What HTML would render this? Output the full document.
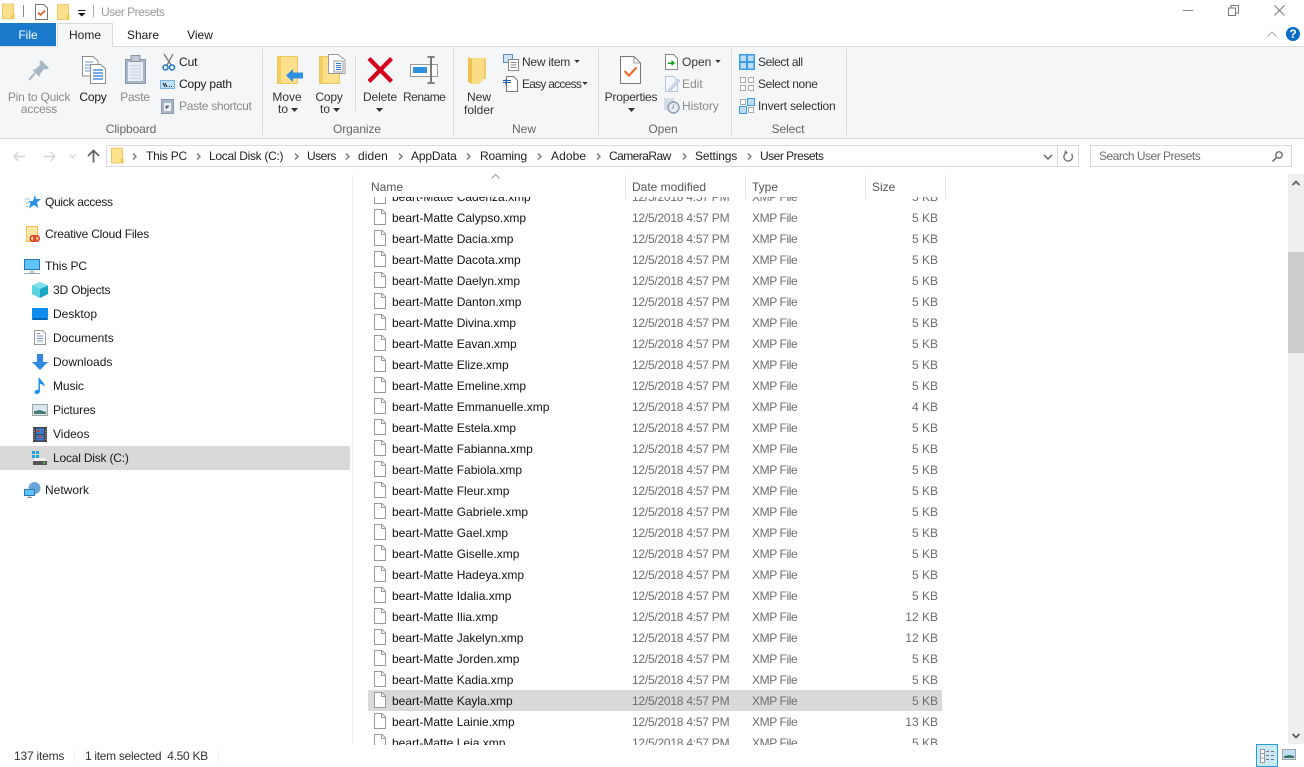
<!DOCTYPE html>
<html><head><meta charset="utf-8"><title>User Presets</title>
<style>
html,body{margin:0;padding:0;background:#fff}
body{width:1304px;height:767px;position:relative;overflow:hidden;font:12px/16px "Liberation Sans",sans-serif;color:#1a1a1a}
.t{position:absolute;white-space:nowrap;line-height:16px}
.c{text-align:center}
.g{color:#8a8a8a}
.l{color:#666}
.b{position:absolute;background:#dadbdc}
svg{position:absolute;overflow:visible}
#list{position:absolute;left:368px;top:197px;width:574px;height:548px;overflow:hidden}
.r{position:absolute;left:0;width:574px;height:21px;line-height:21px;color:#111}
.r svg{left:6px;top:2px}
.r span{position:absolute;top:1px;white-space:nowrap}
.n{left:24px}.d{left:264px;color:#6d6d6d;letter-spacing:-.24px}.y{left:384px;color:#6d6d6d;letter-spacing:-.4px}.s{right:4px;color:#6d6d6d}
</style></head><body>
<svg width="0" height="0" style="position:absolute"><defs>
<symbol id="file" viewBox="0 0 12 16"><path d="M.5.5H8L11.500 4V15.500H.5Z" fill="#fff" stroke="#9a9a9a"/><path d="M7.500.5V4.500H11.500" fill="none" stroke="#9a9a9a"/></symbol>
<symbol id="fold" viewBox="0 0 14 17"><path d="M.5.5H12.500V16.500H.5Z" fill="#fde08c" stroke="#e8c560"/><path d="M10.500 11.500H13.500V16.500H10.500Z" fill="#f0c94f"/></symbol>
<symbol id="caret" viewBox="0 0 7 4"><path d="M0 0H7L3.500 4Z" fill="#333"/></symbol>
<symbol id="chev" viewBox="0 0 5 7"><path d="M1 .5L4 3.500L1 6.500" fill="none" stroke="#777" stroke-width="1.400"/></symbol>
</defs></svg>

<!-- title bar -->
<svg style="left:2px;top:3px" width="13" height="17"><use href="#fold" width="13" height="17"/></svg>
<div class="b" style="left:23px;top:5px;width:1px;height:12px;background:#888"></div>
<svg style="left:35px;top:4px" width="13" height="16"><path d="M.5.500H9L12.500 4V15.500H.500Z" fill="#fff" stroke="#777"/><path d="M3 8.500L5.500 11L10 6.500" fill="none" stroke="#e8562a" stroke-width="1.600"/></svg>
<svg style="left:57px;top:4px" width="13" height="16"><use href="#fold" width="13" height="16"/></svg>
<svg style="left:78px;top:10px" width="8" height="7"><path d="M0 0H7.500V1H0ZM0 3H7.500L3.750 6.500Z" fill="#111"/></svg>
<div class="b" style="left:93px;top:5px;width:1px;height:12px;background:#aaa"></div>
<div class="t g" style="left:101px;top:4px;color:#9a9a9a;letter-spacing:-.5px">User Presets</div>
<div class="b" style="left:1183px;top:10px;width:10px;height:1px;background:#888"></div>
<svg style="left:1228px;top:5px" width="11" height="11"><path d="M.500 3H7.500V10.500H.500ZM3 3V.500H10.500V8H8" fill="none" stroke="#777"/></svg>
<svg style="left:1274px;top:5px" width="11" height="11"><path d="M.500.500L10.500 10.500M10.500.500L.500 10.500" stroke="#777"/></svg>

<!-- tabs -->
<div class="t c" style="left:0;top:23px;width:56px;height:23px;line-height:24px;background:#1979ca;color:#fff">File</div>
<div class="t c" style="left:57px;top:23px;width:56px;height:24px;line-height:23px;background:#f5f6f7;border:1px solid #dadbdc;border-bottom:0;box-sizing:border-box;z-index:2;color:#222">Home</div>
<div class="t c" style="left:115px;top:27px;width:56px">Share</div>
<div class="t c" style="left:172px;top:27px;width:56px">View</div>
<svg style="left:1267px;top:31px" width="10" height="6"><path d="M.500 5.500L5 1L9.500 5.500" fill="none" stroke="#aaa"/></svg>
<div class="t c" style="left:1286px;top:27px;width:14px;height:14px;border-radius:50%;background:#0b6bc4;color:#fff;font-weight:bold;line-height:14px">?</div>

<!-- ribbon -->
<div style="position:absolute;left:0;top:46px;width:1304px;height:93px;background:#f5f6f7;border-top:1px solid #dadbdc;border-bottom:1px solid #dadbdc;box-sizing:border-box"></div>
<div class="b" style="left:262px;top:49px;width:1px;height:86px"></div>
<div class="b" style="left:453px;top:49px;width:1px;height:86px"></div>
<div class="b" style="left:598px;top:49px;width:1px;height:86px"></div>
<div class="b" style="left:731px;top:49px;width:1px;height:86px"></div>
<div class="b" style="left:846px;top:49px;width:1px;height:86px"></div>
<div class="b" style="left:355px;top:56px;width:1px;height:55px"></div>

<!-- Clipboard -->
<svg style="left:28px;top:59px" width="22" height="22"><path d="M13 1L21 9L18.500 10.500L16 10L12 15L11.500 18L4.500 11L7.500 10L12 6L11.500 3.500Z" fill="#a9b6c4"/><path d="M7 14L1 21" stroke="#a9b6c4" stroke-width="2"/></svg>
<div class="t c g" style="left:4px;top:89px;width:70px;letter-spacing:-.2px">Pin to Quick</div>
<div class="t c g" style="left:4px;top:101px;width:70px;letter-spacing:-.2px">access</div>
<svg style="left:82px;top:56px" width="25" height="28"><path d="M.500.500H11L16 5V20H.500Z" fill="#fff" stroke="#8e8e8e"/><path d="M3 6H11M3 9H13M3 12H13M3 15H13" stroke="#6d94d8"/><path d="M8.500 8.500H19L23.500 13V27.500H8.500Z" fill="#fff" stroke="#8e8e8e"/><path d="M11 14H21M11 17H21M11 20H21M11 23H21" stroke="#2f78d8" stroke-width="1.300"/></svg>
<div class="t c" style="left:78px;top:89px;width:30px;letter-spacing:-.2px">Copy</div>
<svg style="left:125px;top:55px" width="22" height="29"><rect x=".5" y="4.500" width="20" height="24" fill="#a8b6c8" stroke="#8a97a8"/><rect x="3" y="7" width="15" height="19" fill="#e8edf5"/><path d="M5 11H16M5 14H16M5 17H16M5 20H16M5 23H16" stroke="#c2cfe0"/><rect x="6" y=".5" width="9" height="6" fill="#bcc7d4" stroke="#8a97a8"/></svg>
<div class="t c g" style="left:120px;top:89px;width:30px;letter-spacing:-.2px">Paste</div>
<svg style="left:162px;top:54px" width="14" height="17"><path d="M2 0L9 11M11 0L5 11" stroke="#777" stroke-width="1.300"/><circle cx="3.500" cy="13.500" r="2.500" fill="none" stroke="#1c75c8" stroke-width="1.500"/><circle cx="10" cy="13.500" r="2.500" fill="none" stroke="#1c75c8" stroke-width="1.500"/></svg>
<div class="t" style="left:179px;top:54px;letter-spacing:-.1px">Cut</div>
<svg style="left:160px;top:80px" width="15" height="9"><rect x=".5" y=".5" width="14" height="8" fill="#bfe0f8" stroke="#7ab4e0"/><path d="M3 3L5 7M5 3L7 7M9 6.500H10M11 6.500H12" stroke="#222"/></svg>
<div class="t" style="left:179px;top:76px;letter-spacing:-.2px">Copy path</div>
<svg style="left:161px;top:98px" width="13" height="16"><rect x=".5" y="1.500" width="12" height="14" fill="#a8b6c8" stroke="#8a97a8"/><rect x="3" y="5" width="7" height="8" fill="#eef2f7"/><path d="M5 11V8H8M8 8L6 10" stroke="#6a7d94"/></svg>
<div class="t g" style="left:179px;top:98px;letter-spacing:-.3px">Paste shortcut</div>
<div class="t c l" style="left:100px;top:121px;width:62px;letter-spacing:-.1px">Clipboard</div>

<!-- Organize -->
<svg style="left:277px;top:56px" width="27" height="28"><path d="M.5.5H20.500V27.500H.5Z" fill="#fde08c" stroke="#ecc95f"/><path d="M1 1H4V27H1Z" fill="#f5ce5f"/><path d="M9 19.500L16 13V16.500H26V22.500H16V26Z" fill="#2f8fe0"/></svg>
<div class="t c l" style="left:272px;top:89px;width:30px;color:#333">Move</div>
<div class="t" style="left:278px;top:101px;color:#333">to</div>
<svg style="left:291px;top:108px" width="7" height="4"><use href="#caret" width="7" height="4"/></svg>
<svg style="left:319px;top:54px" width="27" height="30"><path d="M.5 2.500H20.500V29.500H.5Z" fill="#fde08c" stroke="#ecc95f"/><path d="M1 3H4V29H1Z" fill="#f5ce5f"/><path d="M9.500.5H19L26 6V19.500H9.500Z" fill="#fff" stroke="#999"/><path d="M15 7H24V18H15Z" fill="#fff" stroke="#999"/><path d="M17 9.500H22M17 11.500H22M17 13.500H22M17 15.500H22" stroke="#2f78d8"/></svg>
<div class="t c" style="left:314px;top:89px;width:30px;color:#333;letter-spacing:-.2px">Copy</div>
<div class="t" style="left:320px;top:101px;color:#333">to</div>
<svg style="left:333px;top:108px" width="7" height="4"><use href="#caret" width="7" height="4"/></svg>
<svg style="left:367px;top:57px" width="26" height="26"><path d="M2 1.500L24.500 24.500M24.500 1.500L2 24.500" stroke="#d6001c" stroke-width="4.200"/></svg>
<div class="t c" style="left:360px;top:89px;width:40px;color:#333;letter-spacing:-.1px">Delete</div>
<svg style="left:376px;top:108px" width="7" height="4"><use href="#caret" width="7" height="4"/></svg>
<svg style="left:410px;top:56px" width="28" height="27"><path d="M.5 8.500H27.500V20.500H.5Z" fill="#fff" stroke="#999"/><rect x="3" y="11" width="14" height="6" fill="#2f8fe0"/><path d="M21 2V26M17.500 1H24.500M17.500 27H24.500" stroke="#6d6d6d" stroke-width="1.800"/></svg>
<div class="t c" style="left:403px;top:89px;width:41px;color:#333;letter-spacing:-.5px">Rename</div>
<div class="t c l" style="left:327px;top:121px;width:60px;letter-spacing:-.1px">Organize</div>

<!-- New -->
<svg style="left:468px;top:57px" width="19" height="27"><path d="M0 0L4 2V27L0 25Z" fill="#edc24f"/><path d="M3 1H18V18H16V22L11 27H4V2Z" fill="#fbdc87"/><path d="M16 1H18V22H16Z" fill="#f3cd6b"/></svg>
<div class="t c" style="left:461px;top:89px;width:36px;color:#333">New</div>
<div class="t c" style="left:461px;top:102px;width:36px;color:#333">folder</div>
<svg style="left:503px;top:54px" width="16" height="17"><rect x=".5" y=".5" width="9" height="8" fill="#cfe4f7" stroke="#5b8db8"/><rect x="5.500" y="5.500" width="10" height="11" fill="#fff" stroke="#888"/><path d="M7.500 8.500H13.500M7.500 11H13.500M7.500 13.500H13.500" stroke="#888"/></svg>
<div class="t" style="left:522px;top:54px;color:#333;letter-spacing:-.25px">New item</div>
<svg style="left:574px;top:60px" width="6" height="3"><use href="#caret" width="6" height="3"/></svg>
<svg style="left:503px;top:76px" width="15" height="16"><path d="M3.500.5H10.500L14.500 4.500V15.500H3.500Z" fill="#fff" stroke="#777"/><path d="M0 4.500H8M0 6.500H8M3 3V9" stroke="#1c5ea8"/></svg>
<div class="t" style="left:522px;top:76px;color:#333;letter-spacing:-.75px">Easy access</div>
<svg style="left:582px;top:82px" width="6" height="3"><use href="#caret" width="6" height="3"/></svg>
<div class="t c l" style="left:504px;top:121px;width:40px">New</div>

<!-- Open -->
<svg style="left:620px;top:56px" width="21" height="28"><path d="M.5.500H14L20.500 7V27.500H.5Z" fill="#fff" stroke="#777"/><path d="M14 .5V7H20.500" fill="none" stroke="#999"/><path d="M4.500 15L9 19.500L16.500 11.500" fill="none" stroke="#ee6a2c" stroke-width="2.200"/></svg>
<div class="t c" style="left:600px;top:89px;width:62px;color:#333;letter-spacing:-.2px">Properties</div>
<svg style="left:628px;top:108px" width="7" height="4"><use href="#caret" width="7" height="4"/></svg>
<svg style="left:665px;top:54px" width="13" height="16"><path d="M.5.500H8.500L12.500 4.500V15.500H.5Z" fill="#fff" stroke="#888"/><path d="M3 8.500H6.500V6L10 9L6.500 12V10H3Z" fill="#10a010"/></svg>
<div class="t" style="left:682px;top:54px;color:#333">Open</div>
<svg style="left:715px;top:60px" width="6" height="3"><use href="#caret" width="6" height="3"/></svg>
<svg style="left:665px;top:76px" width="15" height="16"><path d="M.5.500H8.500L12.500 4.500V15.500H.5Z" fill="#f3f6fa" stroke="#b5c4d6"/><path d="M3 14L13 3L15 5L5 15.500Z" fill="#c8d6e8" stroke="#aebed2" stroke-width=".5"/></svg>
<div class="t g" style="left:682px;top:76px">Edit</div>
<svg style="left:663px;top:98px" width="17" height="16"><rect x="1" y="0" width="10" height="12" fill="#d4dce6"/><circle cx="10.500" cy="9.500" r="5.500" fill="#e8ecf1" stroke="#8d9cb0" stroke-width="1.400"/><path d="M10.500 6.500V9.500L8.500 11" fill="none" stroke="#8d9cb0"/></svg>
<div class="t g" style="left:682px;top:98px;letter-spacing:-.1px">History</div>
<div class="t c l" style="left:643px;top:121px;width:40px">Open</div>

<!-- Select -->
<svg style="left:739px;top:54px" width="16" height="16"><rect width="16" height="16" fill="#3a9be8"/><rect x="1.500" y="1.500" width="5.500" height="5.500" fill="#bcdcf8"/><rect x="9" y="1.500" width="5.500" height="5.500" fill="#bcdcf8"/><rect x="1.500" y="9" width="5.500" height="5.500" fill="#bcdcf8"/><rect x="9" y="9" width="5.500" height="5.500" fill="#bcdcf8"/></svg>
<div class="t" style="left:758px;top:54px;color:#333;letter-spacing:-.4px">Select all</div>
<svg style="left:739px;top:76px" width="16" height="16"><path d="M1.500 1.500H6.500V6.500H1.500ZM9.500 1.500H14.500V6.500H9.500ZM1.500 9.500H6.500V14.500H1.500ZM9.500 9.500H14.500V14.500H9.500Z" fill="#fff" stroke="#aaa"/></svg>
<div class="t" style="left:758px;top:76px;color:#333;letter-spacing:-.35px">Select none</div>
<svg style="left:739px;top:98px" width="16" height="16"><path d="M1.500 1.500H6.500V6.500H1.500ZM9.500 9.500H14.500V14.500H9.500Z" fill="#fff" stroke="#aaa"/><path d="M8.500.500H15.500V7.500H8.500ZM.500 8.500H7.500V15.500H.500Z" fill="#bcdcf8" stroke="#3a9be8"/></svg>
<div class="t" style="left:758px;top:98px;color:#333;letter-spacing:-.2px">Invert selection</div>
<div class="t c l" style="left:768px;top:121px;width:40px;letter-spacing:-.1px">Select</div>

<!-- nav -->
<svg style="left:13px;top:151px" width="13" height="11"><path d="M1 5.500H12M1 5.500L5.500 1M1 5.500L5.500 10" fill="none" stroke="#d5d5d5" stroke-width="1.500"/></svg>
<svg style="left:43px;top:151px" width="13" height="11"><path d="M12 5.500H1M12 5.500L7.500 1M12 5.500L7.500 10" fill="none" stroke="#d5d5d5" stroke-width="1.500"/></svg>
<svg style="left:69px;top:154px" width="7" height="5"><path d="M.5.500L3.500 3.500L6.500.500" fill="none" stroke="#d0d0d0"/></svg>
<svg style="left:87px;top:149px" width="13" height="14"><path d="M6.500 13.500V1.500M1 7L6.500 1.500L12 7" fill="none" stroke="#666" stroke-width="1.800"/></svg>

<!-- address -->
<div style="position:absolute;left:106px;top:145px;width:973px;height:22px;border:1px solid #d9d9d9;box-sizing:border-box"></div>
<div class="b" style="left:1057px;top:145px;width:1px;height:22px;background:#d9d9d9"></div>
<svg style="left:111px;top:147px" width="13" height="17"><use href="#fold" width="13" height="17"/></svg>
<svg style="left:132px;top:153px" width="5" height="7"><use href="#chev" width="5" height="7"/></svg>
<div class="t" style="left:146px;top:148px;color:#222;letter-spacing:-.25px">This PC</div>
<svg style="left:196px;top:153px" width="5" height="7"><use href="#chev" width="5" height="7"/></svg>
<div class="t" style="left:209px;top:148px;color:#222;letter-spacing:-.3px">Local Disk (C:)</div>
<svg style="left:294px;top:153px" width="5" height="7"><use href="#chev" width="5" height="7"/></svg>
<div class="t" style="left:307px;top:148px;color:#222;letter-spacing:-.5px">Users</div>
<svg style="left:345px;top:153px" width="5" height="7"><use href="#chev" width="5" height="7"/></svg>
<div class="t" style="left:358px;top:148px;color:#222;letter-spacing:.1px">diden</div>
<svg style="left:398px;top:153px" width="5" height="7"><use href="#chev" width="5" height="7"/></svg>
<div class="t" style="left:411px;top:148px;color:#222;letter-spacing:-.15px">AppData</div>
<svg style="left:466px;top:153px" width="5" height="7"><use href="#chev" width="5" height="7"/></svg>
<div class="t" style="left:480px;top:148px;color:#222;letter-spacing:-.15px">Roaming</div>
<svg style="left:537px;top:153px" width="5" height="7"><use href="#chev" width="5" height="7"/></svg>
<div class="t" style="left:551px;top:148px;color:#222;letter-spacing:.1px">Adobe</div>
<svg style="left:596px;top:153px" width="5" height="7"><use href="#chev" width="5" height="7"/></svg>
<div class="t" style="left:609px;top:148px;color:#222;letter-spacing:-.55px">CameraRaw</div>
<svg style="left:682px;top:153px" width="5" height="7"><use href="#chev" width="5" height="7"/></svg>
<div class="t" style="left:695px;top:148px;color:#222;letter-spacing:-.15px">Settings</div>
<svg style="left:747px;top:153px" width="5" height="7"><use href="#chev" width="5" height="7"/></svg>
<div class="t" style="left:760px;top:148px;color:#222;letter-spacing:-.5px">User Presets</div>
<svg style="left:1043px;top:154px" width="10" height="6"><path d="M1 1L5 5L9 1" fill="none" stroke="#666" stroke-width="1.500"/></svg>
<svg style="left:1062px;top:150px" width="11" height="12"><path d="M9.500 4A4.300 4.300 0 1 1 5.500 2.500H2.500M3.500.5V3" fill="none" stroke="#777" stroke-width="1.400"/></svg>
<div style="position:absolute;left:1090px;top:145px;width:202px;height:22px;border:1px solid #d9d9d9;box-sizing:border-box"></div>
<div class="t" style="left:1099px;top:148px;color:#6d6d6d;letter-spacing:-.5px">Search User Presets</div>
<svg style="left:1272px;top:151px" width="11" height="11"><circle cx="7" cy="4" r="3.200" fill="none" stroke="#666" stroke-width="1.300"/><path d="M4.500 6.500L.5 10.500" stroke="#666" stroke-width="1.500"/></svg>

<!-- tree -->
<div class="b" style="left:352px;top:174px;width:1px;height:570px;background:#f0f0f0"></div>
<div class="b" style="left:0;top:446px;width:350px;height:24px;background:#d9d9d9"></div>
<svg style="left:25px;top:194px" width="16" height="15"><path d="M10 .5L11 5H16L12 8.500L13.500 14L9 11L4 14.500L5.500 9L3 7H8Z" fill="#2c8fe6"/><path d="M0 5H5M1 9H4M1 12.500H3.500" stroke="#8cc4f0"/></svg>
<div class="t" style="left:45px;top:194px;letter-spacing:-.3px">Quick access</div>
<svg style="left:26px;top:226px" width="13" height="17"><path d="M.5.500H11.500V15.500H.5Z" fill="#fde6a6" stroke="#edc24f"/><circle cx="7" cy="12.500" r="2.800" fill="none" stroke="#dc2c1c" stroke-width="1.400"/><circle cx="10.500" cy="12.500" r="2.800" fill="none" stroke="#dc2c1c" stroke-width="1.400"/></svg>
<div class="t" style="left:45px;top:226px;letter-spacing:-.2px">Creative Cloud Files</div>
<svg style="left:24px;top:259px" width="16" height="15"><rect x=".5" y=".5" width="15" height="10" fill="#5ec4fc" stroke="#2b78b0"/><path d="M5 13H11M8 11V13M0 14.500H16" stroke="#9aa4ae"/></svg>
<div class="t" style="left:45px;top:258px;letter-spacing:-.1px">This PC</div>
<svg style="left:32px;top:282px" width="16" height="16"><path d="M8 0L16 3.500V12L8 16L0 12V3.500Z" fill="#1ba8c4"/><path d="M8 0L16 3.500L8 7L0 3.500Z" fill="#7fe0ea"/><path d="M8 7V16L0 12V3.500Z" fill="#5cd2de"/></svg>
<div class="t" style="left:53px;top:282px;letter-spacing:-.2px">3D Objects</div>
<svg style="left:32px;top:308px" width="16" height="12"><rect width="16" height="12" fill="#0d8cf0"/><path d="M1 11H15" stroke="#003c78"/></svg>
<div class="t" style="left:53px;top:306px">Desktop</div>
<svg style="left:34px;top:330px" width="12" height="15"><path d="M.5.500H8.500L11.500 3.500V14.500H.5Z" fill="#fff" stroke="#999"/><path d="M3 3.500H6M3 6H9M3 8.500H9M3 11H9" stroke="#6c8fb8"/></svg>
<div class="t" style="left:53px;top:330px">Documents</div>
<svg style="left:32px;top:354px" width="16" height="16"><path d="M5 0H11V8H16L8 16L0 8H5Z" fill="#2f8ae0"/></svg>
<div class="t" style="left:53px;top:354px">Downloads</div>
<svg style="left:34px;top:378px" width="12" height="16"><path d="M4.500 0H6C6.500 3 11 4 10.500 9C9.500 7 7.500 6 6 6V13C6 15 4 16 2.500 16C.5 16 0 14 1 13C2 12 3.500 11.500 4.500 12Z" fill="#1f96ea"/></svg>
<div class="t" style="left:53px;top:378px;letter-spacing:-.1px">Music</div>
<svg style="left:32px;top:404px" width="16" height="12"><rect x=".5" y=".5" width="15" height="11" fill="#d6e8f2" stroke="#a0a0a0"/><path d="M2 7L8 6L14 8V10H2Z" fill="#4c7a74"/></svg>
<div class="t" style="left:53px;top:402px;letter-spacing:-.1px">Pictures</div>
<svg style="left:33px;top:427px" width="14" height="15"><rect width="14" height="15" fill="#444"/><rect x="3" y="1.500" width="8" height="5.500" fill="#2f7fd0"/><rect x="3" y="8" width="8" height="5.500" fill="#3478c8"/><path d="M4 4H7M6 10H9" stroke="#d04030" stroke-width="2"/><path d="M1 2V14M13 2V14" stroke="#bbb" stroke-dasharray="1 1"/></svg>
<div class="t" style="left:53px;top:426px">Videos</div>
<svg style="left:32px;top:451px" width="16" height="14"><rect x="0" y="0" width="3" height="3" fill="#1ba1e8"/><rect x="4" y="0" width="3" height="3" fill="#1ba1e8"/><rect x="0" y="4" width="3" height="3" fill="#1ba1e8"/><rect x="4" y="4" width="3" height="3" fill="#1ba1e8"/><path d="M3 7H13L15 10H1Z" fill="#f2f2f2"/><rect x="1" y="10" width="14" height="4" fill="#555"/><rect x="11" y="11" width="2" height="1.500" fill="#5fd05f"/></svg>
<div class="t" style="left:53px;top:450px;letter-spacing:-.2px">Local Disk (C:)</div>
<svg style="left:24px;top:482px" width="17" height="16"><circle cx="10.500" cy="6" r="6" fill="#6aa6d8"/><rect x=".5" y="7.500" width="10" height="6" fill="#5ec4fc" stroke="#2b78b0"/><path d="M3 15.500H8M5.500 14V15.500" stroke="#8a96a2"/></svg>
<div class="t" style="left:45px;top:482px">Network</div>

<!-- header -->
<div class="t" style="left:371px;top:179px;color:#555">Name</div>
<svg style="left:491px;top:174px" width="9" height="5"><path d="M.5 4.500L4.500 .5L8.500 4.500" fill="none" stroke="#999"/></svg>
<div class="t" style="left:632px;top:179px;color:#555">Date modified</div>
<div class="t" style="left:752px;top:179px;color:#555">Type</div>
<div class="t" style="left:872px;top:179px;color:#555">Size</div>
<div class="b" style="left:625px;top:175px;width:1px;height:24px;background:#e5e5e5"></div>
<div class="b" style="left:745px;top:175px;width:1px;height:24px;background:#e5e5e5"></div>
<div class="b" style="left:865px;top:175px;width:1px;height:24px;background:#e5e5e5"></div>
<div class="b" style="left:945px;top:175px;width:1px;height:24px;background:#e5e5e5"></div>

<!-- list -->
<div id="list">
<div class="r" style="top:-11px"><svg width="12" height="16"><use href="#file" width="12" height="16"/></svg><span class="n">beart-Matte Cadenza.xmp</span><span class="d">12/5/2018 4:57 PM</span><span class="y">XMP File</span><span class="s">5 KB</span></div>
<div class="r" style="top:10px"><svg width="12" height="16"><use href="#file" width="12" height="16"/></svg><span class="n">beart-Matte Calypso.xmp</span><span class="d">12/5/2018 4:57 PM</span><span class="y">XMP File</span><span class="s">5 KB</span></div>
<div class="r" style="top:31px"><svg width="12" height="16"><use href="#file" width="12" height="16"/></svg><span class="n">beart-Matte Dacia.xmp</span><span class="d">12/5/2018 4:57 PM</span><span class="y">XMP File</span><span class="s">5 KB</span></div>
<div class="r" style="top:52px"><svg width="12" height="16"><use href="#file" width="12" height="16"/></svg><span class="n">beart-Matte Dacota.xmp</span><span class="d">12/5/2018 4:57 PM</span><span class="y">XMP File</span><span class="s">5 KB</span></div>
<div class="r" style="top:73px"><svg width="12" height="16"><use href="#file" width="12" height="16"/></svg><span class="n">beart-Matte Daelyn.xmp</span><span class="d">12/5/2018 4:57 PM</span><span class="y">XMP File</span><span class="s">5 KB</span></div>
<div class="r" style="top:94px"><svg width="12" height="16"><use href="#file" width="12" height="16"/></svg><span class="n">beart-Matte Danton.xmp</span><span class="d">12/5/2018 4:57 PM</span><span class="y">XMP File</span><span class="s">5 KB</span></div>
<div class="r" style="top:115px"><svg width="12" height="16"><use href="#file" width="12" height="16"/></svg><span class="n">beart-Matte Divina.xmp</span><span class="d">12/5/2018 4:57 PM</span><span class="y">XMP File</span><span class="s">5 KB</span></div>
<div class="r" style="top:136px"><svg width="12" height="16"><use href="#file" width="12" height="16"/></svg><span class="n">beart-Matte Eavan.xmp</span><span class="d">12/5/2018 4:57 PM</span><span class="y">XMP File</span><span class="s">5 KB</span></div>
<div class="r" style="top:157px"><svg width="12" height="16"><use href="#file" width="12" height="16"/></svg><span class="n">beart-Matte Elize.xmp</span><span class="d">12/5/2018 4:57 PM</span><span class="y">XMP File</span><span class="s">5 KB</span></div>
<div class="r" style="top:178px"><svg width="12" height="16"><use href="#file" width="12" height="16"/></svg><span class="n">beart-Matte Emeline.xmp</span><span class="d">12/5/2018 4:57 PM</span><span class="y">XMP File</span><span class="s">5 KB</span></div>
<div class="r" style="top:199px"><svg width="12" height="16"><use href="#file" width="12" height="16"/></svg><span class="n">beart-Matte Emmanuelle.xmp</span><span class="d">12/5/2018 4:57 PM</span><span class="y">XMP File</span><span class="s">4 KB</span></div>
<div class="r" style="top:220px"><svg width="12" height="16"><use href="#file" width="12" height="16"/></svg><span class="n">beart-Matte Estela.xmp</span><span class="d">12/5/2018 4:57 PM</span><span class="y">XMP File</span><span class="s">5 KB</span></div>
<div class="r" style="top:241px"><svg width="12" height="16"><use href="#file" width="12" height="16"/></svg><span class="n">beart-Matte Fabianna.xmp</span><span class="d">12/5/2018 4:57 PM</span><span class="y">XMP File</span><span class="s">5 KB</span></div>
<div class="r" style="top:262px"><svg width="12" height="16"><use href="#file" width="12" height="16"/></svg><span class="n">beart-Matte Fabiola.xmp</span><span class="d">12/5/2018 4:57 PM</span><span class="y">XMP File</span><span class="s">5 KB</span></div>
<div class="r" style="top:283px"><svg width="12" height="16"><use href="#file" width="12" height="16"/></svg><span class="n">beart-Matte Fleur.xmp</span><span class="d">12/5/2018 4:57 PM</span><span class="y">XMP File</span><span class="s">5 KB</span></div>
<div class="r" style="top:304px"><svg width="12" height="16"><use href="#file" width="12" height="16"/></svg><span class="n">beart-Matte Gabriele.xmp</span><span class="d">12/5/2018 4:57 PM</span><span class="y">XMP File</span><span class="s">5 KB</span></div>
<div class="r" style="top:325px"><svg width="12" height="16"><use href="#file" width="12" height="16"/></svg><span class="n">beart-Matte Gael.xmp</span><span class="d">12/5/2018 4:57 PM</span><span class="y">XMP File</span><span class="s">5 KB</span></div>
<div class="r" style="top:346px"><svg width="12" height="16"><use href="#file" width="12" height="16"/></svg><span class="n">beart-Matte Giselle.xmp</span><span class="d">12/5/2018 4:57 PM</span><span class="y">XMP File</span><span class="s">5 KB</span></div>
<div class="r" style="top:367px"><svg width="12" height="16"><use href="#file" width="12" height="16"/></svg><span class="n">beart-Matte Hadeya.xmp</span><span class="d">12/5/2018 4:57 PM</span><span class="y">XMP File</span><span class="s">5 KB</span></div>
<div class="r" style="top:388px"><svg width="12" height="16"><use href="#file" width="12" height="16"/></svg><span class="n">beart-Matte Idalia.xmp</span><span class="d">12/5/2018 4:57 PM</span><span class="y">XMP File</span><span class="s">5 KB</span></div>
<div class="r" style="top:409px"><svg width="12" height="16"><use href="#file" width="12" height="16"/></svg><span class="n">beart-Matte Ilia.xmp</span><span class="d">12/5/2018 4:57 PM</span><span class="y">XMP File</span><span class="s">12 KB</span></div>
<div class="r" style="top:430px"><svg width="12" height="16"><use href="#file" width="12" height="16"/></svg><span class="n">beart-Matte Jakelyn.xmp</span><span class="d">12/5/2018 4:57 PM</span><span class="y">XMP File</span><span class="s">12 KB</span></div>
<div class="r" style="top:451px"><svg width="12" height="16"><use href="#file" width="12" height="16"/></svg><span class="n">beart-Matte Jorden.xmp</span><span class="d">12/5/2018 4:57 PM</span><span class="y">XMP File</span><span class="s">5 KB</span></div>
<div class="r" style="top:472px"><svg width="12" height="16"><use href="#file" width="12" height="16"/></svg><span class="n">beart-Matte Kadia.xmp</span><span class="d">12/5/2018 4:57 PM</span><span class="y">XMP File</span><span class="s">5 KB</span></div>
<div class="r" style="top:493px;background:#d9d9d9"><svg width="12" height="16"><use href="#file" width="12" height="16"/></svg><span class="n">beart-Matte Kayla.xmp</span><span class="d">12/5/2018 4:57 PM</span><span class="y">XMP File</span><span class="s">5 KB</span></div>
<div class="r" style="top:514px"><svg width="12" height="16"><use href="#file" width="12" height="16"/></svg><span class="n">beart-Matte Lainie.xmp</span><span class="d">12/5/2018 4:57 PM</span><span class="y">XMP File</span><span class="s">13 KB</span></div>
<div class="r" style="top:535px"><svg width="12" height="16"><use href="#file" width="12" height="16"/></svg><span class="n">beart-Matte Leia.xmp</span><span class="d">12/5/2018 4:57 PM</span><span class="y">XMP File</span><span class="s">5 KB</span></div>
</div>

<!-- scrollbar -->
<div class="b" style="left:1288px;top:174px;width:16px;height:570px;background:#efefef"></div>
<div class="b" style="left:1288px;top:252px;width:16px;height:101px;background:#cdcdcd"></div>
<svg style="left:1292px;top:180px" width="8" height="6"><path d="M.5 5L4 1.500L7.500 5" fill="none" stroke="#555" stroke-width="1.600"/></svg>
<svg style="left:1292px;top:733px" width="8" height="6"><path d="M.5 1L4 4.500L7.500 1" fill="none" stroke="#555" stroke-width="1.600"/></svg>

<!-- status -->
<div class="t" style="left:14px;top:748px;color:#333;letter-spacing:-.2px">137 items</div>
<div class="b" style="left:74px;top:750px;width:1px;height:12px;background:#eee"></div>
<div class="t" style="left:85px;top:748px;color:#333;letter-spacing:-.3px">1 item selected&nbsp; 4.50 KB</div>
<div class="b" style="left:218px;top:750px;width:1px;height:12px;background:#eee"></div>
<div style="position:absolute;left:1256px;top:744px;width:22px;height:23px;background:#cbe8f6;border:1px solid #26a0da;box-sizing:border-box"></div>
<svg style="left:1260px;top:749px" width="15" height="14"><path d="M.5.500H4.500V13.500H.5ZM.5 4.500H4.500M.5 9H4.500" fill="#fff" stroke="#999"/><path d="M6 2.500H9M11 2.500H14M6 6.500H9M11 6.500H14M6 10.500H9M11 10.500H14" stroke="#777"/></svg>
<svg style="left:1282px;top:749px" width="14" height="11"><rect x=".5" y=".5" width="13" height="10" fill="#bfe0f8" stroke="#a0a0a0"/><path d="M2 7L7 6L12 7V9H2Z" fill="#40705e"/></svg>
</body></html>
